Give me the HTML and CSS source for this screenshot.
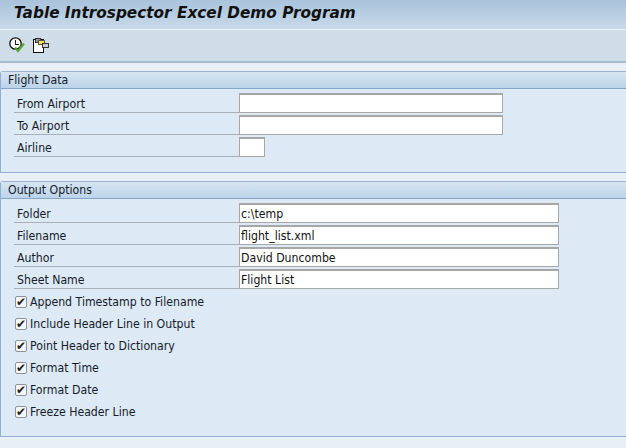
FILE: index.html
```html
<!DOCTYPE html>
<html lang="en">
<head>
<meta charset="utf-8">
<title>Table Introspector Excel Demo Program</title>
<link rel="stylesheet" href="styles.css">
</head>
<body>
<header class="title-bar"><h1 class="title">Table Introspector Excel Demo Program</h1></header>
<nav class="toolbar">
  <svg class="tool-icon" width="16" height="16" viewBox="0 0 16 16">
    <circle cx="6.5" cy="6.5" r="5.7" fill="#fff" stroke="#111" stroke-width="1.3"/>
    <path d="M6.5 2.5V7H10" fill="none" stroke="#222" stroke-width="1" shape-rendering="crispEdges"/>
    <path d="M6 10.5L9 14L15 6.5" fill="none" stroke="#5aa532" stroke-width="2.2"/>
  </svg>
  <svg class="tool-icon" width="16" height="16" viewBox="0 0 16 16" shape-rendering="crispEdges">
    <path d="M0.5 2.5H10.5V15H0.5Z" fill="#fff" stroke="#111"/>
    <rect x="2.5" y="1.5" width="5" height="4" fill="#9a8cb0" stroke="#333"/>
    <rect x="5.5" y="3.5" width="6" height="4" fill="#f2e23c" stroke="#555"/>
    <rect x="9.5" y="6.5" width="6" height="4" fill="#c9cdd6" stroke="#333"/>
  </svg>
</nav>
<main class="content">
  <section class="group group-flight">
    <h2 class="group-head">Flight Data</h2>
    <div class="group-body">
      <div class="row"><label class="label">From Airport</label><input class="field field-airport" type="text"></div>
      <div class="row"><label class="label">To Airport</label><input class="field field-airport" type="text"></div>
      <div class="row"><label class="label">Airline</label><input class="field field-airline" type="text"></div>
    </div>
  </section>
  <section class="group group-output">
    <h2 class="group-head">Output Options</h2>
    <div class="group-body">
      <div class="row"><label class="label">Folder</label><input class="field field-text" type="text" value="c:\temp"></div>
      <div class="row"><label class="label">Filename</label><input class="field field-text" type="text" value="flight_list.xml"></div>
      <div class="row"><label class="label">Author</label><input class="field field-text" type="text" value="David Duncombe"></div>
      <div class="row"><label class="label">Sheet Name</label><input class="field field-text" type="text" value="Flight List"></div>
      <div class="check"><span class="box">✔</span>Append Timestamp to Filename</div>
      <div class="check"><span class="box">✔</span>Include Header Line in Output</div>
      <div class="check"><span class="box">✔</span>Point Header to Dictionary</div>
      <div class="check"><span class="box">✔</span>Format Time</div>
      <div class="check"><span class="box">✔</span>Format Date</div>
      <div class="check"><span class="box">✔</span>Freeze Header Line</div>
    </div>
  </section>
</main>
</body>
</html>
```
FILE: styles.css
```css
html, body { margin: 0; padding: 0; height: 100%; overflow: hidden; }
body { background: #e8eff7; font-family: "DejaVu Sans Condensed", "DejaVu Sans", sans-serif; font-size: 12.2px; color: #141c29; }
.title-bar { height: 30px; box-sizing: border-box; background: linear-gradient(#a9c3db, #c8daea); border-bottom: 1px solid #eef3f8; display: flex; align-items: center; padding: 0 0 3px 14px; }
.title { margin: 0; font: italic bold 15.3px "DejaVu Sans", sans-serif; color: #111; white-space: nowrap; }
.toolbar { height: 33px; box-sizing: border-box; background: #cfdde9; border-bottom: 2px solid #a9bccd; display: flex; align-items: center; gap: 8px; padding: 0 0 1px 9px; }
.content { padding-top: 8px; display: flex; flex-direction: column; gap: 8px; }
.group { border: 1px solid #8fb0d2; border-top-color: #9db4cf; border-right: 0; border-radius: 3px 0 0 0; background: #dde9f5; }
.group-head { margin: 0; height: 16px; line-height: 17px; padding-left: 7px; font-size: 12.2px; font-weight: normal; background: linear-gradient(#d6e4f2, #bcd3e9); border-bottom: 1px solid #86a5c9; }
.group-flight .group-body { padding: 2px 0 15px 13px; }
.group-output .group-body { padding: 2px 0 15px 13px; }
.row { display: flex; align-items: flex-end; height: 22px; }
.label { width: 225px; box-sizing: border-box; height: 22px; line-height: 26px; padding-left: 3px; border-bottom: 1px solid #a9afb6; flex: none; }
.field { box-sizing: border-box; height: 20px; margin: 0; padding: 1px 1px 0; border: 1px solid #a7a7a7; border-top: 2px solid #a7a7a7; background: #fff; font: 12.2px "DejaVu Sans Condensed", "DejaVu Sans", sans-serif; color: #111; outline: 0; }
.field-airport { width: 264px; }
.field-airline { width: 26px; }
.field-text { width: 320px; }
.check { display: flex; align-items: center; box-sizing: border-box; height: 22px; padding: 3px 0 0 1px; gap: 3px; }
.box { width: 10px; height: 10px; border: 1px solid #8d9298; border-radius: 2px; background: #f6f8fb; display: flex; align-items: center; justify-content: center; font: 12px "DejaVu Sans", sans-serif; color: #222; flex: none; }
```
